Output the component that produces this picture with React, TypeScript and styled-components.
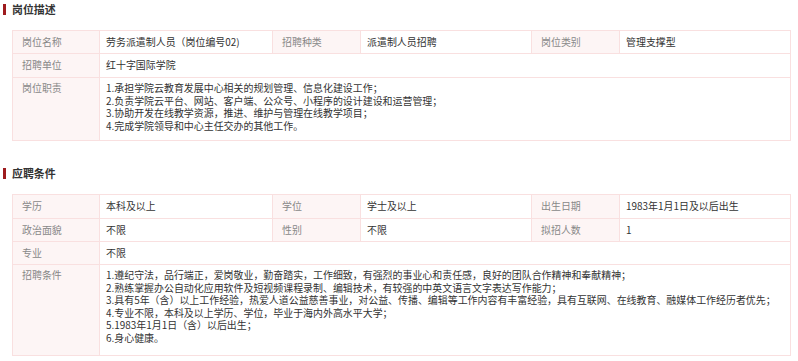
import React from 'react';
import styled, { createGlobalStyle } from 'styled-components';

const GlobalStyle = createGlobalStyle`
  body {
    margin: 0;
    background: #fff;
    font-family: 'Noto Sans CJK SC', 'Liberation Sans', sans-serif;
    color: #333;
  }
`;

const App = () => {
  return (
    <Page>
      <GlobalStyle />
      <SectionTitle>岗位描述</SectionTitle>
      <Table>
        <Label>岗位名称</Label>
        <Value>劳务派遣制人员（岗位编号02)</Value>
        <Label>招聘种类</Label>
        <Value>派遣制人员招聘</Value>
        <Label>岗位类别</Label>
        <Value>管理支撑型</Value>

        <Label $h={24}>招聘单位</Label>
        <Value $h={24} $span>
          红十字国际学院
        </Value>

        <Label $multi>岗位职责</Label>
        <Value $span $multi $tail={8}>
          1.承担学院云教育发展中心相关的规划管理、信息化建设工作；
          <br />
          2.负责学院云平台、网站、客户端、公众号、小程序的设计建设和运营管理；
          <br />
          3.协助开发在线教学资源，推进、维护与管理在线教学项目；
          <br />
          4.完成学院领导和中心主任交办的其他工作。
        </Value>
      </Table>

      <SectionTitle $gap>应聘条件</SectionTitle>
      <Table>
        <Label $h={24}>学历</Label>
        <Value $h={24}>本科及以上</Value>
        <Label $h={24}>学位</Label>
        <Value $h={24}>学士及以上</Value>
        <Label $h={24}>出生日期</Label>
        <Value $h={24}>1983年1月1日及以后出生</Value>

        <Label>政治面貌</Label>
        <Value>不限</Value>
        <Label>性别</Label>
        <Value>不限</Value>
        <Label>拟招人数</Label>
        <Value>1</Value>

        <Label>专业</Label>
        <Value $span>不限</Value>

        <Label $multi>招聘条件</Label>
        <Value $span $multi $tail={11}>
          1.遵纪守法，品行端正，爱岗敬业，勤奋踏实，工作细致，有强烈的事业心和责任感，良好的团队合作精神和奉献精神；
          <br />
          2.熟练掌握办公自动化应用软件及短视频课程录制、编辑技术，有较强的中英文语言文字表达写作能力；
          <br />
          3.具有5年（含）以上工作经验，热爱人道公益慈善事业，对公益、传播、编辑等工作内容有丰富经验，具有互联网、在线教育、融媒体工作经历者优先；
          <br />
          4.专业不限，本科及以上学历、学位，毕业于海内外高水平大学；
          <br />
          5.1983年1月1日（含）以后出生；
          <br />
          6.身心健康。
        </Value>
      </Table>
    </Page>
  );
};

export default App;

const Page = styled.div`
  width: 798px;
  padding-top: 3px;
  font-size: 9.95px;
`;

const SectionTitle = styled.h3<{ $gap?: boolean }>`
  display: flex;
  align-items: center;
  height: 13px;
  margin: ${(p) => (p.$gap ? '26px' : '0')} 0 0 0;
  padding-left: 3px;
  font-size: 10.9px;
  font-weight: 700;
  color: #333;
  line-height: 13px;

  &::before {
    content: '';
    display: block;
    width: 3px;
    height: 11px;
    background-color: #9e1b1e;
    margin-right: 6px;
  }
`;

const Table = styled.div`
  display: grid;
  grid-template-columns: 87px 173px 88px 171px 88px 1fr;
  width: 779px;
  margin: 14px 0 0 12px;
  border-top: 1px solid #f9e0e0;
  border-left: 1px solid #f9e0e0;
  box-sizing: border-box;
`;

type CellProps = { $h?: number; $span?: boolean; $multi?: boolean; $tail?: number };

const Cell = styled.div<CellProps>`
  box-sizing: border-box;
  display: flex;
  align-items: ${(p) => (p.$multi ? 'flex-start' : 'center')};
  min-height: ${(p) => (p.$h ? p.$h : 23)}px;
  border-right: 1px solid #f9e0e0;
  border-bottom: 1px solid #f9e0e0;
  line-height: 12.5px;
  white-space: nowrap;
  grid-column: ${(p) => (p.$span ? '2 / -1' : 'auto')};
`;

const Label = styled(Cell)`
  background-color: #fdf5f5;
  color: #888;
  padding: ${(p) => (p.$multi ? '4px' : '0')} 8px 0 9px;
`;

const Value = styled(Cell)`
  display: ${(p) => (p.$multi ? 'block' : 'flex')};
  color: #333;
  padding: ${(p) => (p.$multi ? `4px 6px ${p.$tail ?? 8}px 6px` : '0 6px')};
`;
